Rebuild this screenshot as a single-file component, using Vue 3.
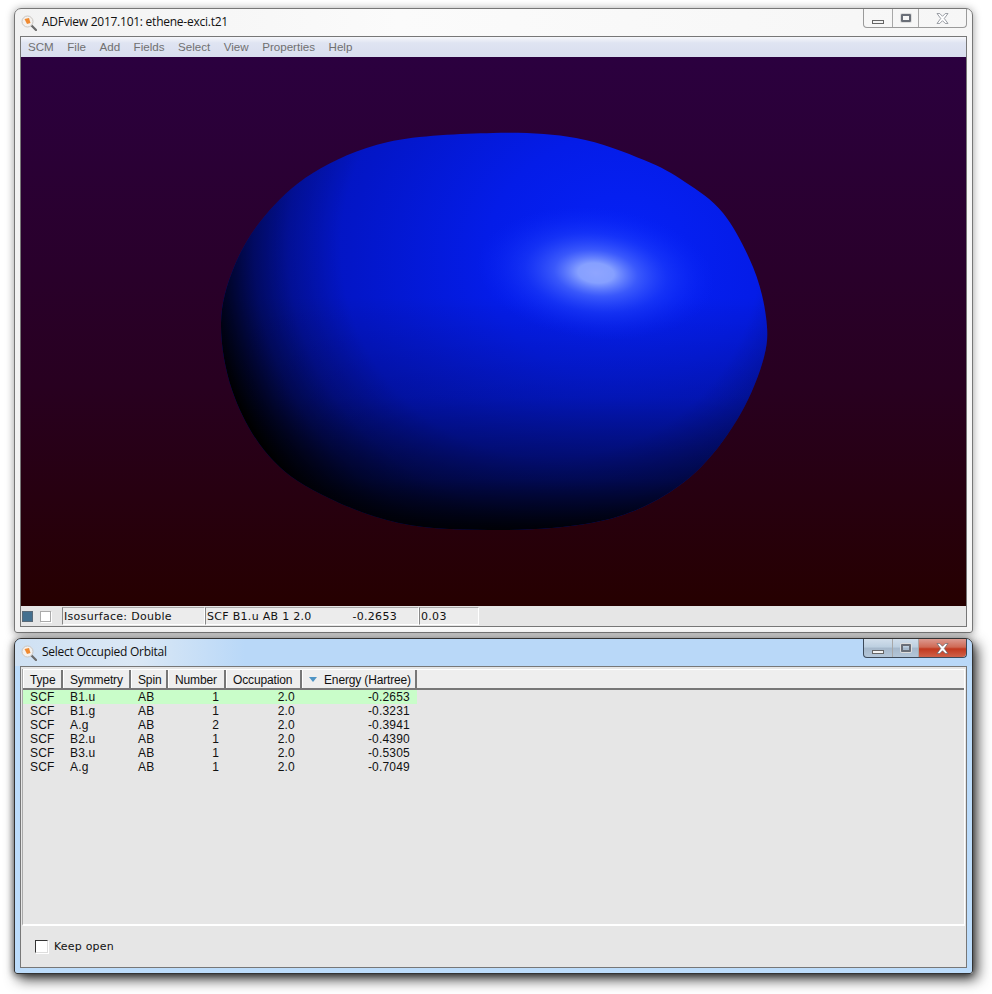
<script setup>
const menus = ["SCM", "File", "Add", "Fields", "Select", "View", "Properties", "Help"];
const columns = [
  { label: "Type", width: 40 },
  { label: "Symmetry", width: 68 },
  { label: "Spin", width: 37 },
  { label: "Number", width: 58 },
  { label: "Occupation", width: 76 },
  { label: "Energy (Hartree)", width: 115, sorted: true },
];
const orbitals = [
  ["SCF", "B1.u", "AB", "1", "2.0", "-0.2653"],
  ["SCF", "B1.g", "AB", "1", "2.0", "-0.3231"],
  ["SCF", "A.g", "AB", "2", "2.0", "-0.3941"],
  ["SCF", "B2.u", "AB", "1", "2.0", "-0.4390"],
  ["SCF", "B3.u", "AB", "1", "2.0", "-0.5305"],
  ["SCF", "A.g", "AB", "1", "2.0", "-0.7049"],
];

// outline of the isosurface, smoothed into a closed curve
const outline = [
  [472, 76], [555, 81], [623, 103], [664, 125], [702, 156], [732, 210], [745, 260], [743, 300],
  [720, 356], [680, 410], [630, 446], [570, 466], [480, 473], [378, 466], [292, 433], [243, 393],
  [211, 333], [200, 266], [213, 210], [243, 160], [292, 116], [367, 85],
];

function smoothPath(pts) {
  const n = pts.length;
  let d = `M${pts[0][0]} ${pts[0][1]}`;
  for (let i = 0; i < n; i++) {
    const p0 = pts[(i - 1 + n) % n];
    const p1 = pts[i];
    const p2 = pts[(i + 1) % n];
    const p3 = pts[(i + 2) % n];
    const c1x = p1[0] + (p2[0] - p0[0]) / 6;
    const c1y = p1[1] + (p2[1] - p0[1]) / 6;
    const c2x = p2[0] - (p3[0] - p1[0]) / 6;
    const c2y = p2[1] - (p3[1] - p1[1]) / 6;
    d += ` C${c1x} ${c1y} ${c2x} ${c2y} ${p2[0]} ${p2[1]}`;
  }
  return d + " Z";
}
const blob = smoothPath(outline);
</script>

<template>
  <div class="desktop">
    <section class="window inactive">
      <header class="titlebar">
        <svg class="app-icon" viewBox="0 0 16 16">
          <path d="M9.5 9.5 L15 15" stroke="#6b6b6b" stroke-width="2.2" stroke-linecap="round" />
          <circle cx="6.5" cy="6.5" r="5.5" fill="#f4f1ee" stroke="#c9c6c2" />
          <path d="M3.5 4 L8 3 L9.5 8 L6 9 Z" fill="#f08a30" />
        </svg>
        <span class="title">ADFview 2017.101: ethene-exci.t21</span>
        <div class="controls">
          <span class="ctl min"><i></i></span>
          <span class="ctl max"><i></i></span>
          <span class="ctl close">
            <svg viewBox="0 0 12 10" width="15" height="11">
              <path d="M1 .5 h2.5 L6 3 L8.5 .5 H11 L7.6 5 L11 9.5 H8.5 L6 7 L3.5 9.5 H1 L4.4 5 Z" fill="#fff" stroke="#7d828b" stroke-width=".7" />
            </svg>
          </span>
        </div>
      </header>
      <div class="client">
        <nav class="menubar">
          <span v-for="m in menus" :key="m">{{ m }}</span>
        </nav>
        <div class="viewport">
          <svg viewBox="0 0 946 549" width="946" height="549">
            <defs>
              <radialGradient id="body" gradientUnits="userSpaceOnUse" cx="0" cy="0" r="450" gradientTransform="translate(600 200) scale(1 .9)">
                <stop offset="0" stop-color="#0622f8" />
                <stop offset=".3" stop-color="#041ce8" />
                <stop offset=".6" stop-color="#0316c8" />
                <stop offset="1" stop-color="#0210a0" />
              </radialGradient>
              <radialGradient id="rim" gradientUnits="userSpaceOnUse" cx="530" cy="190" r="350">
                <stop offset=".6" stop-color="#000" stop-opacity="0" />
                <stop offset=".75" stop-color="#000" stop-opacity=".2" />
                <stop offset=".85" stop-color="#000" stop-opacity=".45" />
                <stop offset=".93" stop-color="#000" stop-opacity=".75" />
                <stop offset="1" stop-color="#000" />
              </radialGradient>
              <linearGradient id="fall" gradientUnits="userSpaceOnUse" x1="0" y1="240" x2="0" y2="473">
                <stop offset="0" stop-color="#000" stop-opacity="0" />
                <stop offset=".43" stop-color="#000" stop-opacity=".2" />
                <stop offset=".78" stop-color="#000" stop-opacity=".55" />
                <stop offset="1" stop-color="#000" stop-opacity=".95" />
              </linearGradient>
              <radialGradient id="shine" gradientUnits="userSpaceOnUse" cx="0" cy="0" r="120" gradientTransform="translate(575 216) rotate(6) scale(1 .55)">
                <stop offset="0" stop-color="#8fa5ff" />
                <stop offset=".15" stop-color="#86a0ff" />
                <stop offset=".35" stop-color="#5070ff" stop-opacity=".7" />
                <stop offset=".6" stop-color="#2a4cff" stop-opacity=".4" />
                <stop offset="1" stop-color="#0a26ff" stop-opacity="0" />
              </radialGradient>
            </defs>
            <path :d="blob" fill="url(#body)" />
            <path :d="blob" fill="url(#rim)" />
            <path :d="blob" fill="url(#fall)" />
            <path :d="blob" fill="url(#shine)" />
          </svg>
        </div>
        <footer class="statusbar">
          <span class="swatch"></span>
          <span class="check small"></span>
          <span class="field f1">Isosurface: Double</span>
          <span class="field f2"><span>SCF B1.u AB 1 2.0</span><span>-0.2653</span></span>
          <span class="field f3">0.03</span>
        </footer>
      </div>
    </section>

    <section class="window active">
      <header class="titlebar">
        <svg class="app-icon" viewBox="0 0 16 16">
          <path d="M9.5 9.5 L15 15" stroke="#6b6b6b" stroke-width="2.2" stroke-linecap="round" />
          <circle cx="6.5" cy="6.5" r="5.5" fill="#f4f1ee" stroke="#c9c6c2" />
          <path d="M3.5 4 L8 3 L9.5 8 L6 9 Z" fill="#f08a30" />
        </svg>
        <span class="title">Select Occupied Orbital</span>
        <div class="controls">
          <span class="ctl min"><i></i></span>
          <span class="ctl max"><i></i></span>
          <span class="ctl close">
            <svg viewBox="0 0 12 10" width="15" height="11">
              <path d="M1 .5 h2.5 L6 3 L8.5 .5 H11 L7.6 5 L11 9.5 H8.5 L6 7 L3.5 9.5 H1 L4.4 5 Z" fill="#fff" stroke="#5a5f68" stroke-width=".6" />
            </svg>
          </span>
        </div>
      </header>
      <div class="client">
        <div class="list">
          <div class="row head">
            <span v-for="c in columns" :key="c.label" class="hcell" :style="{ width: c.width + 'px' }">
              <i v-if="c.sorted" class="sort"></i>{{ c.label }}
            </span>
            <span class="hfill"></span>
          </div>
          <div
            v-for="(o, i) in orbitals"
            :key="i"
            class="row data"
            :class="{ selected: i === 0 }"
          >
            <span
              v-for="(v, j) in o"
              :key="j"
              class="cell"
              :class="{ num: j > 2 }"
              :style="{ width: columns[j].width + 'px' }"
            >{{ v }}</span>
          </div>
        </div>
        <label class="keep">
          <span class="check"></span>
          Keep open
        </label>
      </div>
    </section>
  </div>
</template>

<style scoped>
.desktop {
  width: 992px;
  height: 994px;
  padding: 8px 0 0 14px;
  box-sizing: border-box;
  background: #fff;
  font-family: "Liberation Sans", Arial, sans-serif;
  font-size: 12px;
  color: #111;
  overflow: hidden;
}
.window {
  width: 959px;
  box-sizing: border-box;
  border: 1px solid #555;
  border-radius: 7px 7px 3px 3px;
  padding: 0 5px 5px;
}
.window.inactive {
  height: 625px;
  background: linear-gradient(90deg, #f2f2f2, #fbfbfb 40%, #f6f6f6);
  border-color: #777;
  box-shadow: 0 1px 8px rgba(0, 0, 0, 0.4);
}
.window.active {
  height: 336px;
  margin-top: 5px;
  background: linear-gradient(#bcdcfb, #bcdcfb);
  border-color: #333;
  box-shadow: 4px 5px 14px rgba(0, 0, 0, 0.8), -1px 1px 6px rgba(0, 0, 0, 0.45);
  position: relative;
}
.active .titlebar {
  margin: 0 -5px;
  padding: 0 5px;
  border-radius: 7px 7px 0 0;
  background: linear-gradient(90deg, #cfe1f3 0, #dbe8f5 120px, #b9d8f8 230px, #b9d8f8 100%);
}
.titlebar {
  height: 27px;
  display: flex;
  align-items: center;
  gap: 5px;
}
.app-icon {
  width: 16px;
  height: 16px;
  margin-left: 1px;
}
.title {
  font-family: "Open Sans", "Liberation Sans", sans-serif;
  font-size: 12px;
  letter-spacing: -0.25px;
  margin-bottom: 2px;
}
.controls {
  margin-left: auto;
  display: flex;
  height: 18px;
  align-self: flex-start;
  border: 1px solid #9a9a9a;
  border-top: 0;
  border-radius: 0 0 4px 4px;
  margin-right: 0;
}
.ctl {
  display: flex;
  align-items: center;
  justify-content: center;
  box-sizing: border-box;
  border-right: 1px solid #a8a8a8;
  width: 29px;
}
.ctl.max {
  width: 26px;
}
.ctl.close {
  width: 47px;
  border-right: 0;
}
.ctl.min i {
  width: 10px;
  height: 2px;
  margin-top: 8px;
  background: #f4f4f4;
  border: 1px solid #666;
}
.ctl.max i {
  width: 6px;
  height: 4px;
  border: 2px solid #6a6f78;
  box-shadow: 0 0 0 1px #ddd;
  border-radius: 1px;
}
.active .controls {
  border-color: #3c4a5a;
  background: linear-gradient(#d2dfec 0, #bccfe0 45%, #a5b8cb 50%, #b4c6d8 100%);
}
.active .ctl.close {
  border-radius: 0 0 4px 0;
  background: linear-gradient(#dc9a90 0, #cf6a55 45%, #c2391f 55%, #d0624a 100%);
}
.client {
  height: calc(100% - 27px);
  border: 1px solid #777;
  background: #e6e6e6;
  display: flex;
  flex-direction: column;
  box-sizing: border-box;
}
.menubar {
  height: 20px;
  display: flex;
  align-items: center;
  gap: 13.5px;
  padding: 0 7px 2px;
  color: #707070;
  font-size: 11.6px;
  background: linear-gradient(#f6f7fb 0, #dfe4f2 30%, #d8deee 100%);
  flex: none;
  box-sizing: border-box;
}
.viewport {
  flex: none;
  height: 549px;
  background: linear-gradient(#2b003f 0, #280020 60%, #260000 100%);
}
.viewport svg {
  display: block;
}
.statusbar {
  flex: 1;
  display: flex;
  align-items: center;
  padding-left: 1px;
  font-family: "DejaVu Sans", sans-serif;
  font-size: 11px;
  letter-spacing: 0.3px;
}
.swatch {
  width: 9px;
  height: 9px;
  background: #44708f;
  border: 1px solid #5a6a78;
  margin-right: 7px;
}
.check {
  width: 11px;
  height: 11px;
  background: #fff;
  border: 1px solid #333;
  border-right-color: #ddd;
  border-bottom-color: #ddd;
  box-shadow: 1px 1px 0 #fff;
}
.check.small {
  width: 9px;
  height: 9px;
  border-color: #aaa;
  margin-right: 11px;
}
.field {
  height: 18px;
  line-height: 17px;
  padding: 0 1px;
  box-sizing: border-box;
  border: 1px solid #fff;
  border-top-color: #aaa;
  border-left-color: #888;
  background: #ececec;
  white-space: nowrap;
}
.f1 {
  width: 143px;
}
.f2 {
  width: 214px;
  display: flex;
  justify-content: space-between;
  padding-right: 21px;
}
.f3 {
  width: 60px;
}
.list {
  flex: none;
  height: 257px;
  margin: 2px 1px 0;
  box-sizing: border-box;
  background: #e6e6e6;
  border-bottom: 2px solid #fff;
  border-left: 1px solid #aaa;
  border-right: 1px solid #fff;
}
.row {
  display: flex;
}
.head {
  height: 21px;
  background: #eee;
  border-bottom: 2px solid #777;
  border-top: 1px solid #fff;
  box-sizing: border-box;
}
.hcell {
  box-sizing: border-box;
  border-right: 2px solid #777;
  padding: 1px 0 0 6px;
  white-space: nowrap;
  display: flex;
  align-items: center;
  border-left: 1px solid #fff;
  letter-spacing: -0.15px;
}
.sort {
  width: 0;
  height: 0;
  border-left: 4px solid transparent;
  border-right: 4px solid transparent;
  border-top: 5px solid #4f94c4;
  margin-right: 7px;
}
.hfill {
  flex: 1;
}
.data {
  height: 14px;
  line-height: 13px;
  letter-spacing: 0.2px;
}
.data.selected .cell {
  background: #c9fdc9;
}
.cell {
  box-sizing: border-box;
  padding: 1px 7px 0;
  white-space: nowrap;
}
.cell.num {
  text-align: right;
}
.keep {
  flex: 1;
  display: flex;
  align-items: center;
  gap: 6px;
  padding-left: 14px;
  font-family: "DejaVu Sans", sans-serif;
  font-size: 11px;
  letter-spacing: 0.2px;
}
</style>

<style>
html,
body {
  margin: 0;
  background: #fff;
}
</style>
